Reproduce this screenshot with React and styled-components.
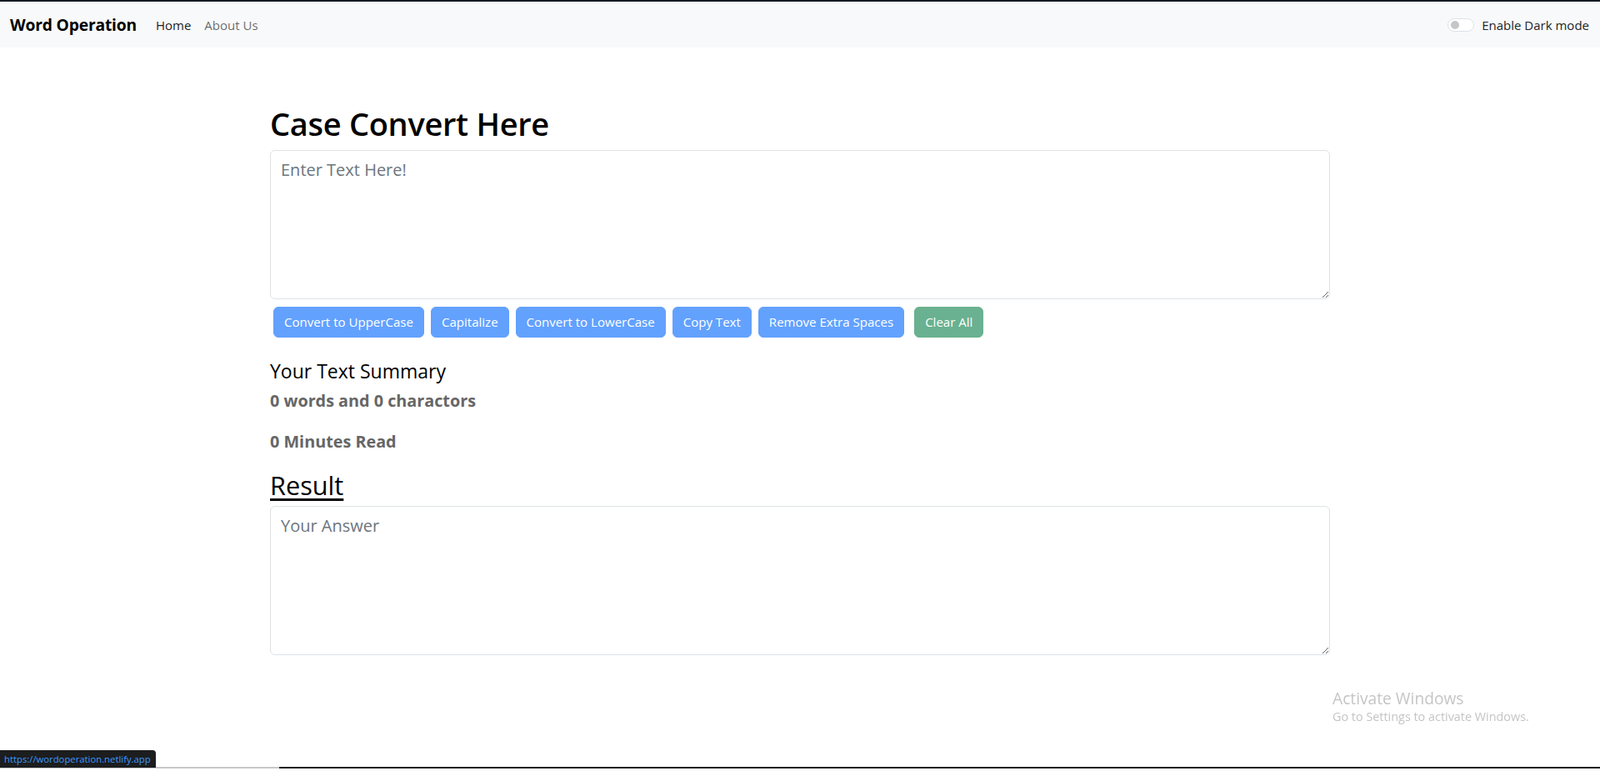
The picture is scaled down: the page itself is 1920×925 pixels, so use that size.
import React from "react";
import styled, { createGlobalStyle } from "styled-components";

const GlobalStyle = createGlobalStyle`
  html, body { margin: 0; padding: 0; background: #fff; }
  body {
    font-family: "Open Sans", "Noto Sans", "Liberation Sans", sans-serif;
    color: #212529;
    -webkit-font-smoothing: antialiased;
  }
  * { box-sizing: border-box; }
`;

const Page = styled.div`
  min-height: 925px;
  display: flex;
  flex-direction: column;
`;

const TopStrip = styled.div`
  height: 2px;
  background: #111a24;
`;

const Navbar = styled.nav`
  height: 55px;
  background: #f8f9fa;
  display: flex;
  align-items: center;
  padding: 0 12px;
`;

const Brand = styled.a`
  font-size: 19.3px;
  font-weight: 700;
  color: #000;
  margin-right: 23px;
  letter-spacing: -0.2px;
`;

const NavLinks = styled.div`
  display: flex;
  gap: 16px;
  flex: 1;
`;

const NavLink = styled.a`
  font-size: 15px;
  color: ${(p) => (p.$active ? "rgba(0,0,0,0.9)" : "rgba(0,0,0,0.6)")};
  text-decoration: none;
`;

const SwitchWrap = styled.label`
  display: flex;
  align-items: center;
  gap: 9px;
  font-size: 15px;
  color: #212529;
  margin-right: 1px;
`;

const Track = styled.span`
  width: 32px;
  height: 16px;
  border: 1px solid #dee2e6;
  border-radius: 8px;
  background: #fff;
  display: flex;
  align-items: center;
  padding-left: 3px;
`;

const Knob = styled.span`
  width: 10px;
  height: 10px;
  border-radius: 50%;
  background: #c4c6c8;
`;

const Main = styled.main`
  width: 1272px;
  margin: 0 auto;
  padding-top: 69px;
`;

const Title = styled.h1`
  margin: 0 0 8px;
  font-size: 38px;
  font-weight: 600;
  line-height: 1.2;
  color: #000;
  letter-spacing: -0.3px;
`;

const TextArea = styled.textarea`
  display: block;
  width: 100%;
  height: 179px;
  border: 1px solid #dee2e6;
  border-radius: 6px;
  padding: 8px 12px;
  font-family: inherit;
  font-size: 20px;
  line-height: 1.5;
  color: #212529;
  background: #fff;
  resize: vertical;
  &::placeholder { color: #6c757d; }
`;

const ButtonRow = styled.div`
  display: flex;
  gap: 8px;
  margin: 9px 0 0 4px;
`;

const Button = styled.button`
  height: 37px;
  padding: 0 12px;
  border: 1px solid ${(p) => (p.$variant === "success" ? "#6ab190" : "#62a1fe")};
  background: ${(p) => (p.$variant === "success" ? "#69b190" : "#62a1fe")};
  color: #fff;
  border-radius: 6px;
  font-family: inherit;
  font-size: 15.05px;
  margin-left: ${(p) => (p.$spaced ? "4px" : "0")};
`;

const SummaryTitle = styled.h4`
  margin: 27px 0 0;
  font-size: 23px;
  font-weight: 400;
  line-height: 1.2;
  color: #000;
`;

const Stat = styled.p`
  margin: ${(p) => (p.$first ? "7px" : "19px")} 0 0;
  font-size: 19.8px;
  font-weight: 700;
  line-height: 1.5;
  color: #666;
`;

const ResultTitle = styled.h2`
  margin: 19px 0 7px;
  font-size: 30.7px;
  font-weight: 400;
  line-height: 1.2;
  color: #000;
  text-decoration: underline;
  text-decoration-thickness: 3px;
  text-underline-offset: 4px;
`;

const Watermark = styled.div`
  position: fixed;
  left: 1599px;
  top: 826px;
  color: #c5c5c5;
  line-height: 1.3;
`;

const WmTitle = styled.div`
  font-size: 19.2px;
`;

const WmSub = styled.div`
  font-size: 14.4px;
`;

const StatusTip = styled.div`
  position: fixed;
  left: 0;
  bottom: 4px;
  height: 21px;
  padding: 0 6px 0 5px;
  background: #1c1d1f;
  color: #3d9bff;
  font-size: 11.3px;
  line-height: 21px;
  border-top-right-radius: 4px;
`;

const BottomEdge = styled.div`
  position: fixed;
  left: 0;
  right: 0;
  bottom: 3px;
  height: 2px;
  display: flex;
`;

const EdgePart = styled.div`
  width: ${(p) => p.$w};
  flex: ${(p) => (p.$grow ? 1 : "none")};
  background: ${(p) => p.$c};
`;

export default function App() {
  return (
    <Page>
      <GlobalStyle />
      <TopStrip />
      <Navbar>
        <Brand>Word Operation</Brand>
        <NavLinks>
          <NavLink $active>Home</NavLink>
          <NavLink>About Us</NavLink>
        </NavLinks>
        <SwitchWrap>
          <Track>
            <Knob />
          </Track>
          Enable Dark mode
        </SwitchWrap>
      </Navbar>
      <Main>
        <Title>Case Convert Here</Title>
        <TextArea placeholder="Enter Text Here!" />
        <ButtonRow>
          <Button>Convert to UpperCase</Button>
          <Button>Capitalize</Button>
          <Button>Convert to LowerCase</Button>
          <Button>Copy Text</Button>
          <Button>Remove Extra Spaces</Button>
          <Button $variant="success" $spaced>Clear All</Button>
        </ButtonRow>
        <SummaryTitle>Your Text Summary</SummaryTitle>
        <Stat $first>0 words and 0 charactors</Stat>
        <Stat>0 Minutes Read</Stat>
        <ResultTitle>Result</ResultTitle>
        <TextArea placeholder="Your Answer" />
      </Main>
      <Watermark>
        <WmTitle>Activate Windows</WmTitle>
        <WmSub>Go to Settings to activate Windows.</WmSub>
      </Watermark>
      <BottomEdge>
        <EdgePart $w="335px" $c="#c8c8c8" />
        <EdgePart $grow $c="#222" />
      </BottomEdge>
      <StatusTip>https://wordoperation.netlify.app</StatusTip>
    </Page>
  );
}
